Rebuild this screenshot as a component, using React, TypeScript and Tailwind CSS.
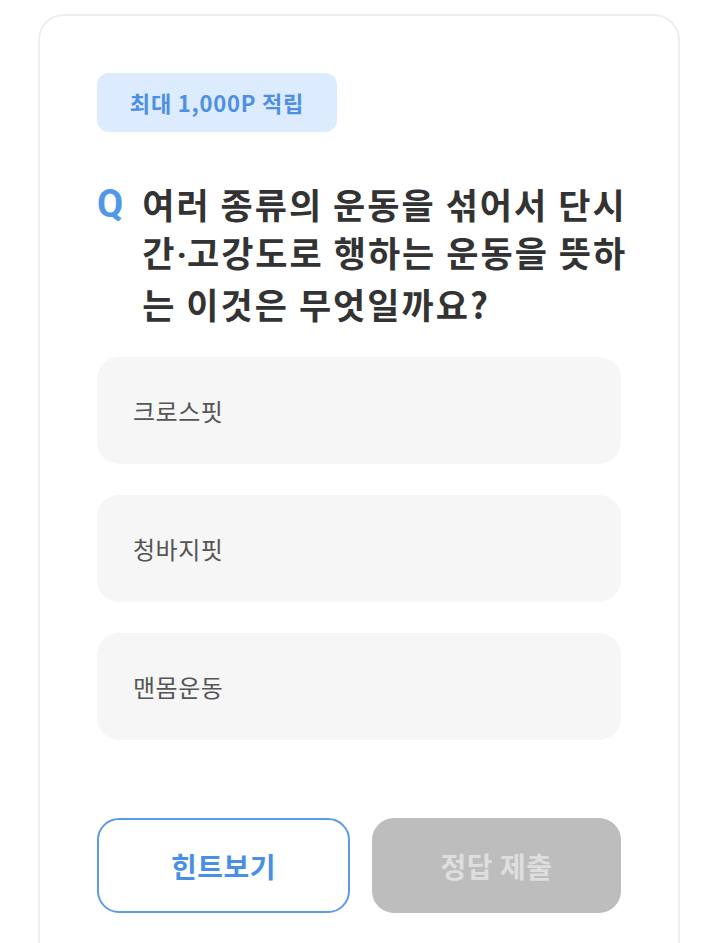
const options = ['크로스핏', '청바지핏', '맨몸운동'];

export default function App() {
  return (
    <div
      className="h-screen overflow-hidden bg-white pt-[14px] pr-[24px] pl-[38px]"
      style={{ fontFamily: '"Noto Sans CJK KR", "Noto Sans", sans-serif' }}
    >
      <div className="h-[960px] rounded-t-[26px] border-2 border-b-0 border-[#eeeeee] px-[57px] pt-[57px]">
        <div className="inline-flex h-[59px] w-[240px] items-center justify-center rounded-[12px] bg-[#dcebfd] text-[22px] font-bold tracking-[0.8px] text-[#4d8fe3]">
          최대 1,000P 적립
        </div>

        <div className="mt-[48px] flex gap-[19px]">
          <span className="font-['Roboto'] text-[38px] leading-[49px] font-bold text-[#5097ec]">Q</span>
          <div className="flex-1 text-[35px] leading-[48px] font-bold tracking-[2px] text-[#333333]">
            <div className="whitespace-nowrap">여러 종류의 운동을 섞어서 단시</div>
            <div className="whitespace-nowrap">
              간<span className="font-['Roboto'] tracking-normal">·</span>고강도로 행하는 운동을 뜻하
            </div>
            <div className="whitespace-nowrap">는 이것은 무엇일까요?</div>
          </div>
        </div>

        <div className="mt-[29px] flex flex-col gap-[31px]">
          {options.map((o) => (
            <div
              key={o}
              className="flex h-[107px] items-center rounded-[22px] bg-[#f6f6f6] pl-[36px] text-[24px] tracking-[0.5px] text-[#555555]"
            >
              {o}
            </div>
          ))}
        </div>

        <div className="mt-[78px] flex gap-[22px]">
          <button className="flex h-[95px] flex-1 items-center justify-center rounded-[22px] border-2 border-[#5b9be8] bg-white text-[28px] font-bold tracking-[0.5px] text-[#4a8fe6]">
            힌트보기
          </button>
          <button className="flex h-[95px] flex-1 items-center justify-center rounded-[22px] bg-[#bdbdbd] text-[28px] font-bold tracking-[0.5px] text-[#dedede]">
            정답 제출
          </button>
        </div>
      </div>
    </div>
  );
}
